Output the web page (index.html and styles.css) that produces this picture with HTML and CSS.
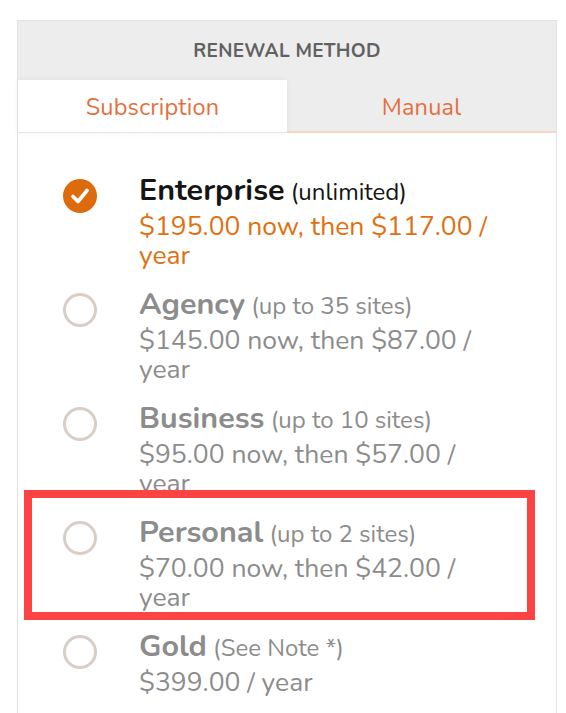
FILE: index.html
```html
<!DOCTYPE html>
<html>
<head>
<meta charset="utf-8">
<link rel="stylesheet" href="styles.css">
</head>
<body>
<div class="panel">
  <div class="head">RENEWAL METHOD</div>
  <div class="tabs">
    <div class="tab active">Subscription</div>
    <div class="tab">Manual</div>
  </div>
  <div class="list">
    <div class="item selected">
      <span class="radio checked"><svg viewBox="0 0 34 34" width="34" height="34"><circle cx="17" cy="17" r="17" fill="#dd6a0c"/><path d="M10 17.5 L15 22.5 L24 11.5" fill="none" stroke="#fff" stroke-width="3.6" stroke-linecap="round" stroke-linejoin="round"/></svg></span>
      <div class="text">
        <div class="title"><b>Enterprise</b> <span class="note">(unlimited)</span></div>
        <div class="price">$195.00 now, then $117.00 / year</div>
      </div>
    </div>
    <div class="item">
      <span class="radio"></span>
      <div class="text">
        <div class="title"><b>Agency</b> <span class="note">(up to 35 sites)</span></div>
        <div class="price">$145.00 now, then $87.00 / year</div>
      </div>
    </div>
    <div class="item">
      <span class="radio"></span>
      <div class="text">
        <div class="title"><b>Business</b> <span class="note">(up to 10 sites)</span></div>
        <div class="price">$95.00 now, then $57.00 / year</div>
      </div>
    </div>
    <div class="item">
      <span class="radio"></span>
      <div class="text">
        <div class="title"><b>Personal</b> <span class="note">(up to 2 sites)</span></div>
        <div class="price">$70.00 now, then $42.00 / year</div>
      </div>
    </div>
    <div class="item">
      <span class="radio"></span>
      <div class="text">
        <div class="title"><b>Gold</b> <span class="note">(See Note *)</span></div>
        <div class="price">$399.00 / year</div>
      </div>
    </div>
  </div>
</div>
<div class="highlight"></div>
</body>
</html>
```
FILE: styles.css
```css
html, body {
  margin: 0;
  padding: 0;
  background: #fff;
  height: 713px;
  overflow: hidden;
}
body {
  font-family: "Nunito", "Lato", "Open Sans", sans-serif;
  position: relative;
}
.panel {
  margin: 20px 0 0 17px;
  width: 538px;
  height: 720px;
  border: 1px solid #e3e3e3;
  border-bottom: none;
}
.head {
  background: #ededed;
  height: 59px;
  display: flex;
  align-items: center;
  justify-content: center;
  font-size: 19px;
  font-weight: 700;
  color: #616161;
  letter-spacing: 0.3px;
}
.tabs {
  display: flex;
  background: #ededed;
  height: 53px;
}
.tab {
  flex: 1;
  display: flex;
  align-items: center;
  justify-content: center;
  font-size: 23.5px;
  color: #e4703f;
  letter-spacing: 0.2px;
  border-bottom: 2px solid #f4d5c6;
  padding-top: 2px;
}
.tab.active {
  background: #fff;
  border-bottom: 1px solid #e6e6e6;
  box-shadow: 0 0 6px rgba(0,0,0,0.06);
}
.list {
  padding: 38px 0 0 45px;
  display: flex;
  flex-direction: column;
  gap: 15px;
}
.item {
  display: flex;
  align-items: flex-start;
  gap: 42px;
}
.radio {
  flex: none;
  width: 34px;
  height: 34px;
  box-sizing: border-box;
  border: 3px solid #d9cdc6;
  border-radius: 50%;
  margin-top: 8px;
}
.radio.checked {
  border: none;
}
.radio svg {
  display: block;
}
.text {
  width: 372px;
  color: #8c8c8c;
}
.title {
  font-size: 24px;
  line-height: 39px;
}
.title b {
  font-size: 30.5px;
  font-weight: 700;
}
.price {
  font-size: 26.5px;
  line-height: 29px;
}
.selected .text {
  color: #151515;
}
.selected .price {
  color: #e0700e;
}
.highlight {
  position: absolute;
  left: 24px;
  top: 490px;
  width: 511px;
  height: 130px;
  box-sizing: border-box;
  border: 8px solid #fc4444;
}
```
